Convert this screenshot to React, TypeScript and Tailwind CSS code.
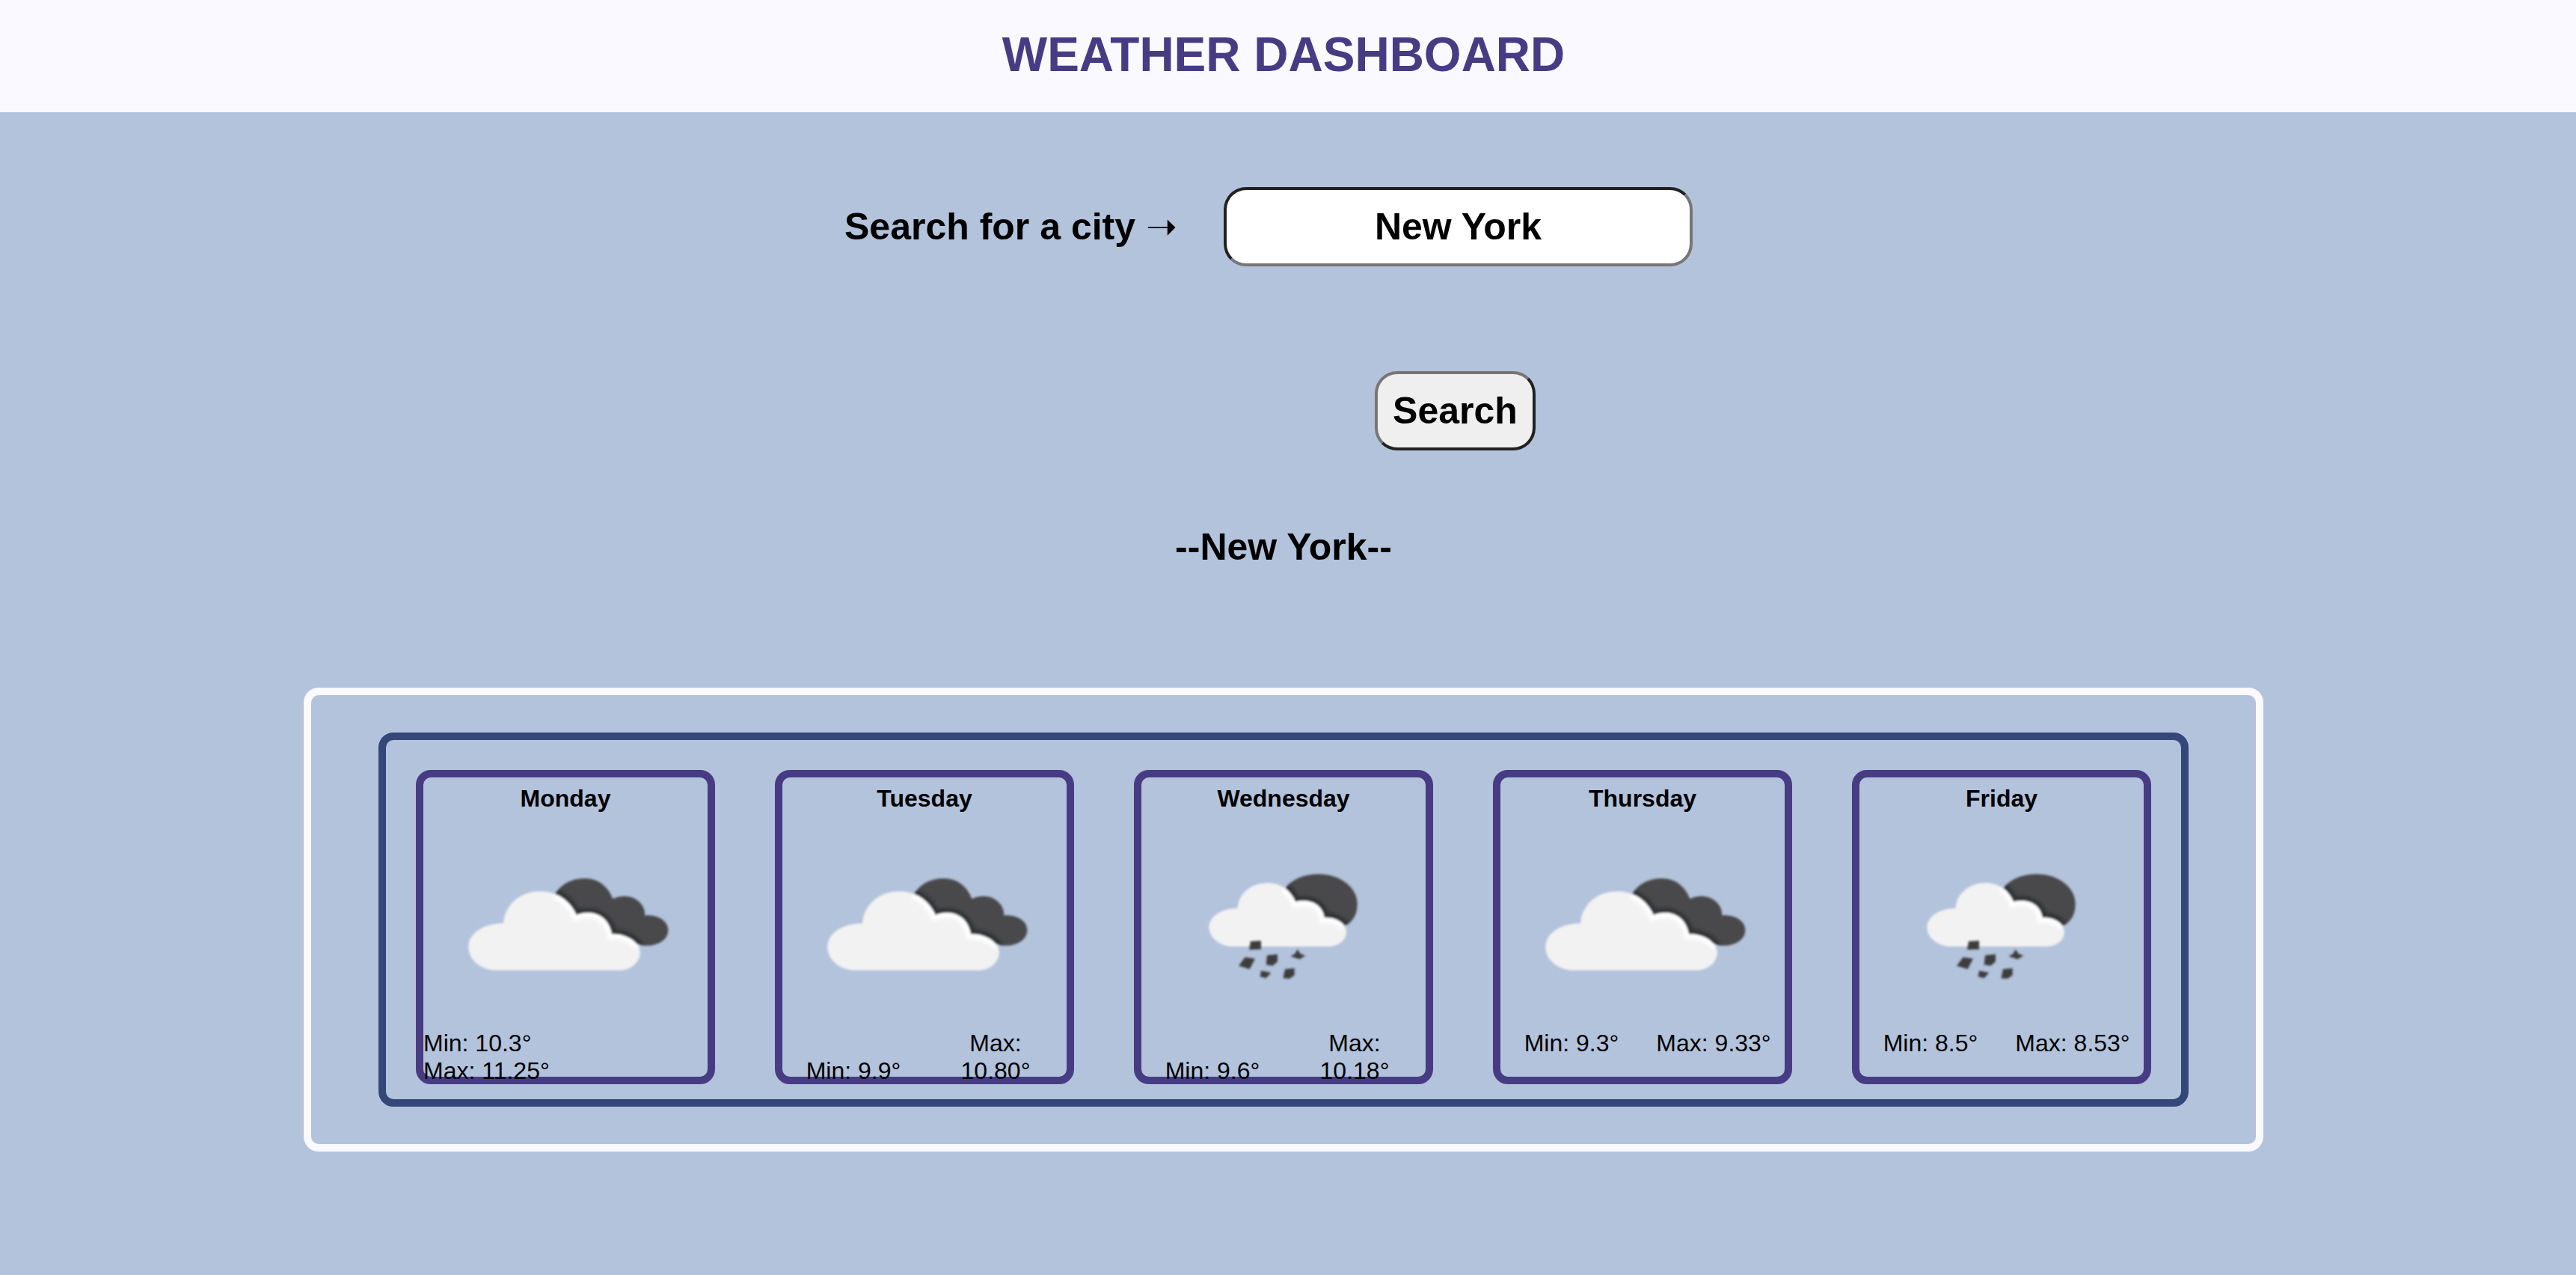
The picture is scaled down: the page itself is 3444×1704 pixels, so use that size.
import { useState } from "react";

type Icon = "clouds" | "rain";
type Day = { name: string; icon: Icon; min: string; max: string; stacked?: boolean };

const DAYS: Day[] = [
  { name: "Monday", icon: "clouds", min: "10.3", max: "11.25", stacked: true },
  { name: "Tuesday", icon: "clouds", min: "9.9", max: "10.80" },
  { name: "Wednesday", icon: "rain", min: "9.6", max: "10.18" },
  { name: "Thursday", icon: "clouds", min: "9.3", max: "9.33" },
  { name: "Friday", icon: "rain", min: "8.5", max: "8.53" },
];

const SHAPES = {
  clouds: {
    viewBox: "18 -192 900 870",
    back:
      "M425 136C450 95 490 72 545 72C600 72 640 105 658 154C700 134 745 144 768 170C783 187 788 203 786 220C838 216 880 242 880 278C880 318 840 341 795 341C780 341 770 340 762 335L600 320L450 200Z",
    front:
      "M185 440C125 438 79 395 79 348C79 296 130 254 219 252C224 180 285 124 365 124C438 124 488 165 512 219C560 200 636 206 654 296C706 292 766 326 768 368C766 410 730 440 685 440Z",
    edge: "M425 134C465 150 495 180 512 219C560 200 636 206 654 296C700 292 748 316 764 348",
  },
  rain: {
    viewBox: "-72 -192 900 870",
    back:
      "M385 112C410 76 460 55 520 55C605 55 674 108 674 175C674 212 660 240 635 256L560 290L420 220Z",
    front:
      "M165 345C115 340 79 305 79 268C79 228 125 192 194 191C197 135 245 90 315 90C368 90 406 120 426 166C475 154 532 168 542 230C585 226 630 252 630 287C630 322 595 345 555 345Z",
    edge: "M380 108C402 120 416 142 426 166C475 154 532 168 542 230C580 226 612 244 625 264",
  },
};

function WeatherIcon({ icon, id }: { icon: Icon; id: string }) {
  const s = SHAPES[icon];
  return (
    <svg viewBox={s.viewBox} className="mx-auto block h-[290px] w-[300px]" role="img" aria-label={icon}>
      <defs>
        <filter id={`${id}-soft`}>
          <feGaussianBlur stdDeviation="5" />
        </filter>
        <filter id={`${id}-shade`}>
          <feGaussianBlur stdDeviation="7" />
        </filter>
        <clipPath id={`${id}-back`}>
          <path d={s.back} />
        </clipPath>
        <clipPath id={`${id}-front`}>
          <path d={s.front} />
        </clipPath>
      </defs>
      <g filter={`url(#${id}-soft)`}>
        <path d={s.back} fill="#4a494b" />
        <g clipPath={`url(#${id}-back)`}>
          <path d={s.edge} fill="none" stroke="#2f3335" strokeWidth="40" filter={`url(#${id}-shade)`} />
        </g>
        <path d={s.front} fill="#f2f2f2" />
        <g clipPath={`url(#${id}-front)`}>
          <path d={s.edge} fill="none" stroke="#ffffff" strokeWidth="40" filter={`url(#${id}-shade)`} />
        </g>
      </g>
      {icon === "rain" && (
        <g fill="#3c3c3e" filter={`url(#${id}-soft)`}>
          <path d="M246 324L288 322L288 356L240 358Z" />
          <path d="M224 388L264 394L242 436L198 422Z" />
          <path d="M312 380L354 376L354 406L334 422L308 418Z" />
          <path d="M288 442L328 450L308 472L284 466Z" />
          <path d="M384 436L422 432L422 460L402 474L376 472Z" />
          <path d="M434 356L446 374L466 382L442 396L406 384L424 374Z" />
        </g>
      )}
    </svg>
  );
}

function DayCard({ day }: { day: Day }) {
  return (
    <li className="h-[420px] rounded-[20px] border-[10px] border-[#473c84] pt-[10px]">
      <h3 className="text-center font-bold">{day.name}</h3>
      <WeatherIcon icon={day.icon} id={day.name} />
      {day.stacked ? (
        <div>
          <p>Min: {day.min}°</p>
          <p>Max: {day.max}°</p>
        </div>
      ) : (
        <div className="grid grid-cols-2 items-end text-center">
          <p className="px-3">Min: {day.min}°</p>
          <p className="px-3">Max: {day.max}°</p>
        </div>
      )}
    </li>
  );
}

export default function App() {
  const [city, setCity] = useState("New York");
  return (
    <div className="min-h-screen bg-[#b3c3dc] font-['Liberation_Sans','DejaVu_Sans',sans-serif] text-black">
      <header className="bg-[#f9f9ff] pt-9 pr-3 pb-10">
        <h1 className="text-center text-[64px] leading-[74px] font-bold text-[#473c84]">WEATHER DASHBOARD</h1>
      </header>
      <main className="pt-[100px] pr-3 pb-40">
        <form
          className="mx-auto flex w-[1174px] max-w-full flex-col text-[50px] leading-[58px] font-bold"
          onSubmit={(e) => e.preventDefault()}
        >
          <div className="flex items-center justify-between pr-10">
            <label htmlFor="city">Search for a city ➝</label>
            <input
              id="city"
              type="text"
              value={city}
              onChange={(e) => setCity(e.target.value)}
              className="h-[106px] w-[627px] rounded-[30px] border-4 border-t-[#212121] border-r-[#767676] border-b-[#767676] border-l-[#212121] bg-white text-center outline-none"
            />
          </div>
          <button
            type="submit"
            className="mt-[140px] mr-[250px] h-[106px] w-[215px] self-end rounded-[30px] border-4 border-t-[#767676] border-r-[#212121] border-b-[#212121] border-l-[#767676] bg-[#efefef]"
          >
            Search
          </button>
        </form>
        <h2 className="mt-[100px] text-center text-[50px] leading-[58px] font-bold">--New York--</h2>
        <section className="mx-auto mt-[159px] w-full max-w-[2620px] rounded-[20px] border-[10px] border-[#f9f9ff] px-[90px] py-[50px]">
          <ul className="grid grid-cols-5 gap-20 rounded-[20px] border-[10px] border-[#354678] px-10 pt-10 pb-5 text-[32px] leading-[37px]">
            {DAYS.map((d) => (
              <DayCard key={d.name} day={d} />
            ))}
          </ul>
        </section>
      </main>
    </div>
  );
}
